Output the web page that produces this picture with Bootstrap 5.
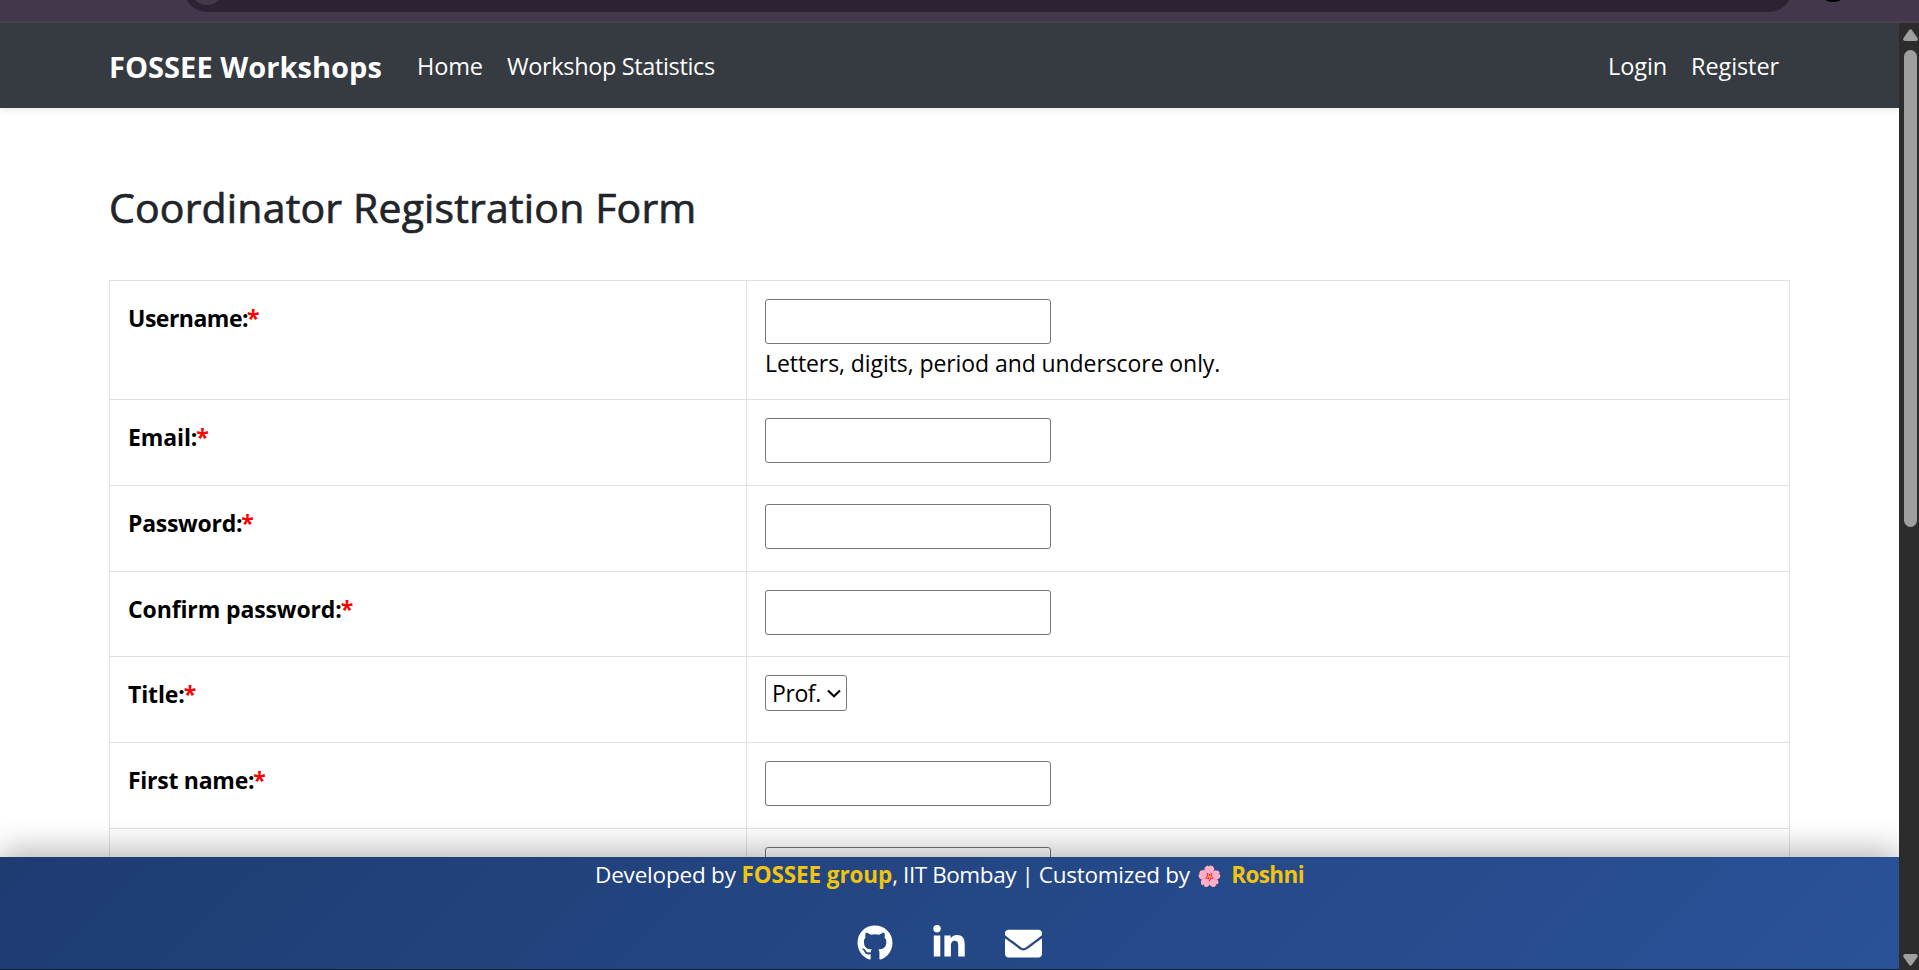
<!DOCTYPE html>
<html lang="en">
<head>
<meta charset="utf-8">
<meta name="viewport" content="width=device-width, initial-scale=1">
<title>Coordinator Registration</title>
<link rel="stylesheet" href="https://cdn.jsdelivr.net/npm/bootstrap@5.3.0/dist/css/bootstrap.min.css">
<style>
  html, body { height: 100%; }
  body { font-family: "Open Sans", "Noto Sans", sans-serif; font-size: 23px; line-height: 36px; background: #fff; color: #000; }
  .chrome-strip { height: 23px; flex: none; background: #43384b; border-bottom: 2px solid #4b3f4f; padding-left: 184px; }
  .address-bar { width: 1608px; height: 46px; margin-top: -34px; border-radius: 23px; background: #2c2233; padding: 3px 6px; }
  .site-chip { width: 34px; height: 36px; border-radius: 50%; background: #43384b; }
  .avatar-dot { width: 34px; height: 34px; margin-top: -32px; margin-left: 24px; border-radius: 50%; background: #000; }
  .site-nav { height: 85px; background: #363a41; padding: 0 112px 0 109px; box-shadow: 0 3px 6px rgba(0,0,0,.075); z-index: 2; }
  .site-nav .navbar-brand { font-size: 29px; font-weight: 700; letter-spacing: .04px; margin: 2px 27px 0 0; padding: 0; color: #fff; }
  .site-nav .nav-link { font-size: 23.5px; color: #fff; white-space: nowrap; letter-spacing: -.1px; }
  .site-nav .nav-tight { letter-spacing: -.36px; }
  .page-heading { font-size: 41px; font-weight: 500; line-height: 50px; letter-spacing: .17px; color: #212529; -webkit-text-stroke: .7px #212529; margin: 74px 0 48px; white-space: nowrap; }
  .form-area { padding-left: 109px; min-height: 0; }
  .reg-table { table-layout: fixed; width: 1681px; border-color: #dee2e6; margin: 0; }
  .reg-table th, .reg-table td { height: 86px; padding: 18px; vertical-align: top; background: #fff; color: #000; }
  .reg-table th { font-weight: 700; padding-top: 19px; width: 637px; letter-spacing: -.12px; }
  .reg-table .tall td { height: 119px; }
  .reg-table .short th, .reg-table .short td { height: 85px; padding-bottom: 17px; }
  .reg-table .label-tight { letter-spacing: -.5px; }
  .reg-table .label-snug { letter-spacing: -.27px; }
  .req { color: red; letter-spacing: 0; margin-left: -1px; }
  .field { display: block; width: 286px; height: 45px; border: 1px solid #767676; border-radius: 3px; background: #fff; }
  .hint { padding-top: 1px; letter-spacing: -.08px; }
  .title-select { appearance: none; display: block; width: 82px; height: 36px; border: 1px solid #767676; border-radius: 3px; padding: 0 0 0 6px; color: #000; letter-spacing: -.4px; line-height: 34px;
    background: #fff url("data:image/svg+xml,%3Csvg xmlns='http://www.w3.org/2000/svg' width='14' height='9'%3E%3Cpath d='M1 1.500 7 7.200l6-5.700' fill='none' stroke='%23000' stroke-width='2.200'/%3E%3C/svg%3E") no-repeat 61px 13px; }
  .site-footer { height: 113px; background: linear-gradient(135deg, #1e3c72, #2a5298); box-shadow: 0 -6px 30px rgba(0,0,0,.3); border-bottom: 1px solid #14202e; color: #fff; z-index: 2; }
  .credit { font-size: 22.5px; height: 36px; white-space: nowrap; letter-spacing: -.2px; }
  .credit-org { letter-spacing: -.42px; }
  .credit-by { letter-spacing: -.28px; }
  .gold { color: #f1c40f; font-weight: 700; letter-spacing: -.1px; }
  .gold-tight { letter-spacing: -.6px; }
  .blossom { font-size: 20px; line-height: 30px; margin: 0 3px 0 2px; letter-spacing: 0; filter: hue-rotate(18deg) saturate(1.9); }
  .socials { padding-top: 32px; gap: 40px; }
  .socials svg { display: block; fill: #fff; }
  .scroll-track { width: 20px; flex: none; background: #2c2c2c; padding: 6px 1px 4px 4px; }
  .scroll-track svg { display: block; fill: #9f9f9f; }
  .scroll-thumb { width: 13px; height: 477px; margin: 9px 0 0 1px; border-radius: 7px; background: #9f9f9f; }
</style>
</head>
<body class="d-flex flex-column overflow-hidden">
<div class="chrome-strip d-flex overflow-hidden"><div class="address-bar"><div class="site-chip"></div></div><div class="avatar-dot"></div></div>
<div class="d-flex flex-grow-1 overflow-hidden">
  <div class="d-flex flex-column flex-grow-1 overflow-hidden">
    <nav class="site-nav navbar navbar-expand flex-shrink-0 position-relative">
      <a class="navbar-brand" href="#">FOSSEE Workshops</a>
      <div class="navbar-nav gap-2"><a class="nav-link" href="#">Home</a><a class="nav-link nav-tight" href="#">Workshop Statistics</a></div>
      <div class="navbar-nav gap-2 ms-auto"><a class="nav-link" href="#">Login</a><a class="nav-link" href="#">Register</a></div>
    </nav>
    <main class="form-area flex-grow-1 overflow-hidden">
      <h2 class="page-heading">Coordinator Registration Form</h2>
      <table class="reg-table table table-bordered"><tbody>
        <tr class="tall"><th class="label-tight">Username:<span class="req">*</span></th><td><input class="field"><div class="hint">Letters, digits, period and underscore only.</div></td></tr>
        <tr><th>Email:<span class="req">*</span></th><td><input class="field"></td></tr>
        <tr><th class="label-snug">Password:<span class="req">*</span></th><td><input class="field" type="password"></td></tr>
        <tr class="short"><th>Confirm password:<span class="req">*</span></th><td><input class="field" type="password"></td></tr>
        <tr><th>Title:<span class="req">*</span></th><td><select class="title-select"><option>Prof.</option></select></td></tr>
        <tr><th class="label-snug">First name:<span class="req">*</span></th><td><input class="field"></td></tr>
        <tr><th></th><td><input class="field"></td></tr>
      </tbody></table>
    </main>
    <footer class="site-footer flex-shrink-0 position-relative text-center">
      <div class="credit">Developed by <span class="gold">FOSSEE group</span><span class="credit-org">, IIT Bombay | </span><span class="credit-by">Customized by</span> <span class="blossom d-inline-block">🌸</span> <span class="gold gold-tight">Roshni</span></div>
      <div class="socials d-flex justify-content-center">
        <svg width="36" height="36" viewBox="0 0 496 512"><path d="M165.900 397.400c0 2-2.300 3.600-5.200 3.600-3.300.3-5.600-1.300-5.600-3.600 0-2 2.300-3.600 5.200-3.600 3-.3 5.600 1.300 5.600 3.600zm-31.100-4.500c-.7 2 1.300 4.300 4.300 4.900 2.600 1 5.600 0 6.200-2s-1.300-4.300-4.300-5.200c-2.600-.7-5.500.3-6.200 2.300zm44.200-1.700c-2.900.7-4.900 2.600-4.600 4.900.3 2 2.900 3.300 5.900 2.600 2.900-.7 4.900-2.600 4.600-4.600-.3-1.900-3-3.200-5.900-2.900zM244.800 8C106.100 8 0 113.300 0 252c0 110.900 69.800 205.800 169.500 239.200 12.800 2.300 17.300-5.600 17.300-12.100 0-6.200-.3-40.400-.3-61.400 0 0-70 15-84.700-29.800 0 0-11.400-29.100-27.800-36.600 0 0-22.900-15.700 1.600-15.400 0 0 24.900 2 38.600 25.800 21.900 38.600 58.600 27.500 72.900 20.900 2.300-16 8.800-27.100 16-33.700-55.900-6.200-112.300-14.300-112.300-110.500 0-27.500 7.600-41.300 23.600-58.900-2.600-6.500-11.100-33.300 2.600-67.900 20.900-6.500 69 27 69 27 20-5.600 41.500-8.500 62.800-8.500s42.800 2.900 62.800 8.500c0 0 48.100-33.600 69-27 13.700 34.700 5.200 61.400 2.600 67.900 16 17.700 25.800 31.500 25.800 58.900 0 96.500-58.900 104.200-114.800 110.500 9.200 7.900 17 22.900 17 46.400 0 33.700-.3 75.400-.3 83.600 0 6.500 4.600 14.400 17.300 12.100C428.200 457.800 496 362.900 496 252 496 113.300 383.500 8 244.800 8z"/></svg>
        <svg width="32" height="36" viewBox="0 0 448 512"><path d="M100.280 448H7.400V148.900h92.880zM53.790 108.100C24.090 108.100 0 83.500 0 53.800a53.790 53.790 0 0 1 107.580 0c0 29.700-24.100 54.300-53.790 54.300zM447.900 448h-92.680V302.400c0-34.700-.7-79.200-48.290-79.200-48.290 0-55.690 37.700-55.690 76.700V448h-92.780V148.900h89.080v40.800h1.300c12.400-23.500 42.690-48.300 87.880-48.300 94 0 111.280 61.900 111.280 142.300V448z"/></svg>
        <svg width="37" height="37" viewBox="0 0 512 512"><path d="M502.300 190.800c3.900-3.100 9.700-.2 9.700 4.700V400c0 26.500-21.500 48-48 48H48c-26.500 0-48-21.500-48-48V195.600c0-5 5.700-7.800 9.700-4.700 22.400 17.400 52.100 39.500 154.100 113.600 21.100 15.400 56.700 47.800 92.200 47.600 35.700.3 72-32.800 92.300-47.600 102-74.100 131.600-96.300 154-113.700zM256 320c23.200.4 56.600-29.200 73.400-41.400 132.700-96.300 142.800-104.700 173.400-128.700 5.800-4.500 9.200-11.500 9.200-18.900v-19c0-26.500-21.500-48-48-48H48c-26.500 0-48 21.500-48 48v19c0 7.400 3.400 14.300 9.200 18.900 30.600 23.900 40.700 32.400 173.400 128.700 16.800 12.200 50.200 41.800 73.400 41.400z"/></svg>
      </div>
    </footer>
  </div>
  <div class="scroll-track d-flex flex-column">
    <svg width="15" height="12" viewBox="0 0 15 12"><path d="M6 1.200Q7.500-.8 9 1.200L14.500 9Q15.500 11.600 13 12H2Q-.5 11.600.5 9z"/></svg>
    <div class="scroll-thumb"></div>
    <svg class="mt-auto" width="15" height="12" viewBox="0 0 15 12"><path d="M6 10.800Q7.500 12.800 9 10.800L14.500 3Q15.500.4 13 0H2Q-.5.4.5 3z"/></svg>
  </div>
</div>
<script src="https://cdn.jsdelivr.net/npm/bootstrap@5.3.0/dist/js/bootstrap.bundle.min.js"></script>
</body>
</html>
